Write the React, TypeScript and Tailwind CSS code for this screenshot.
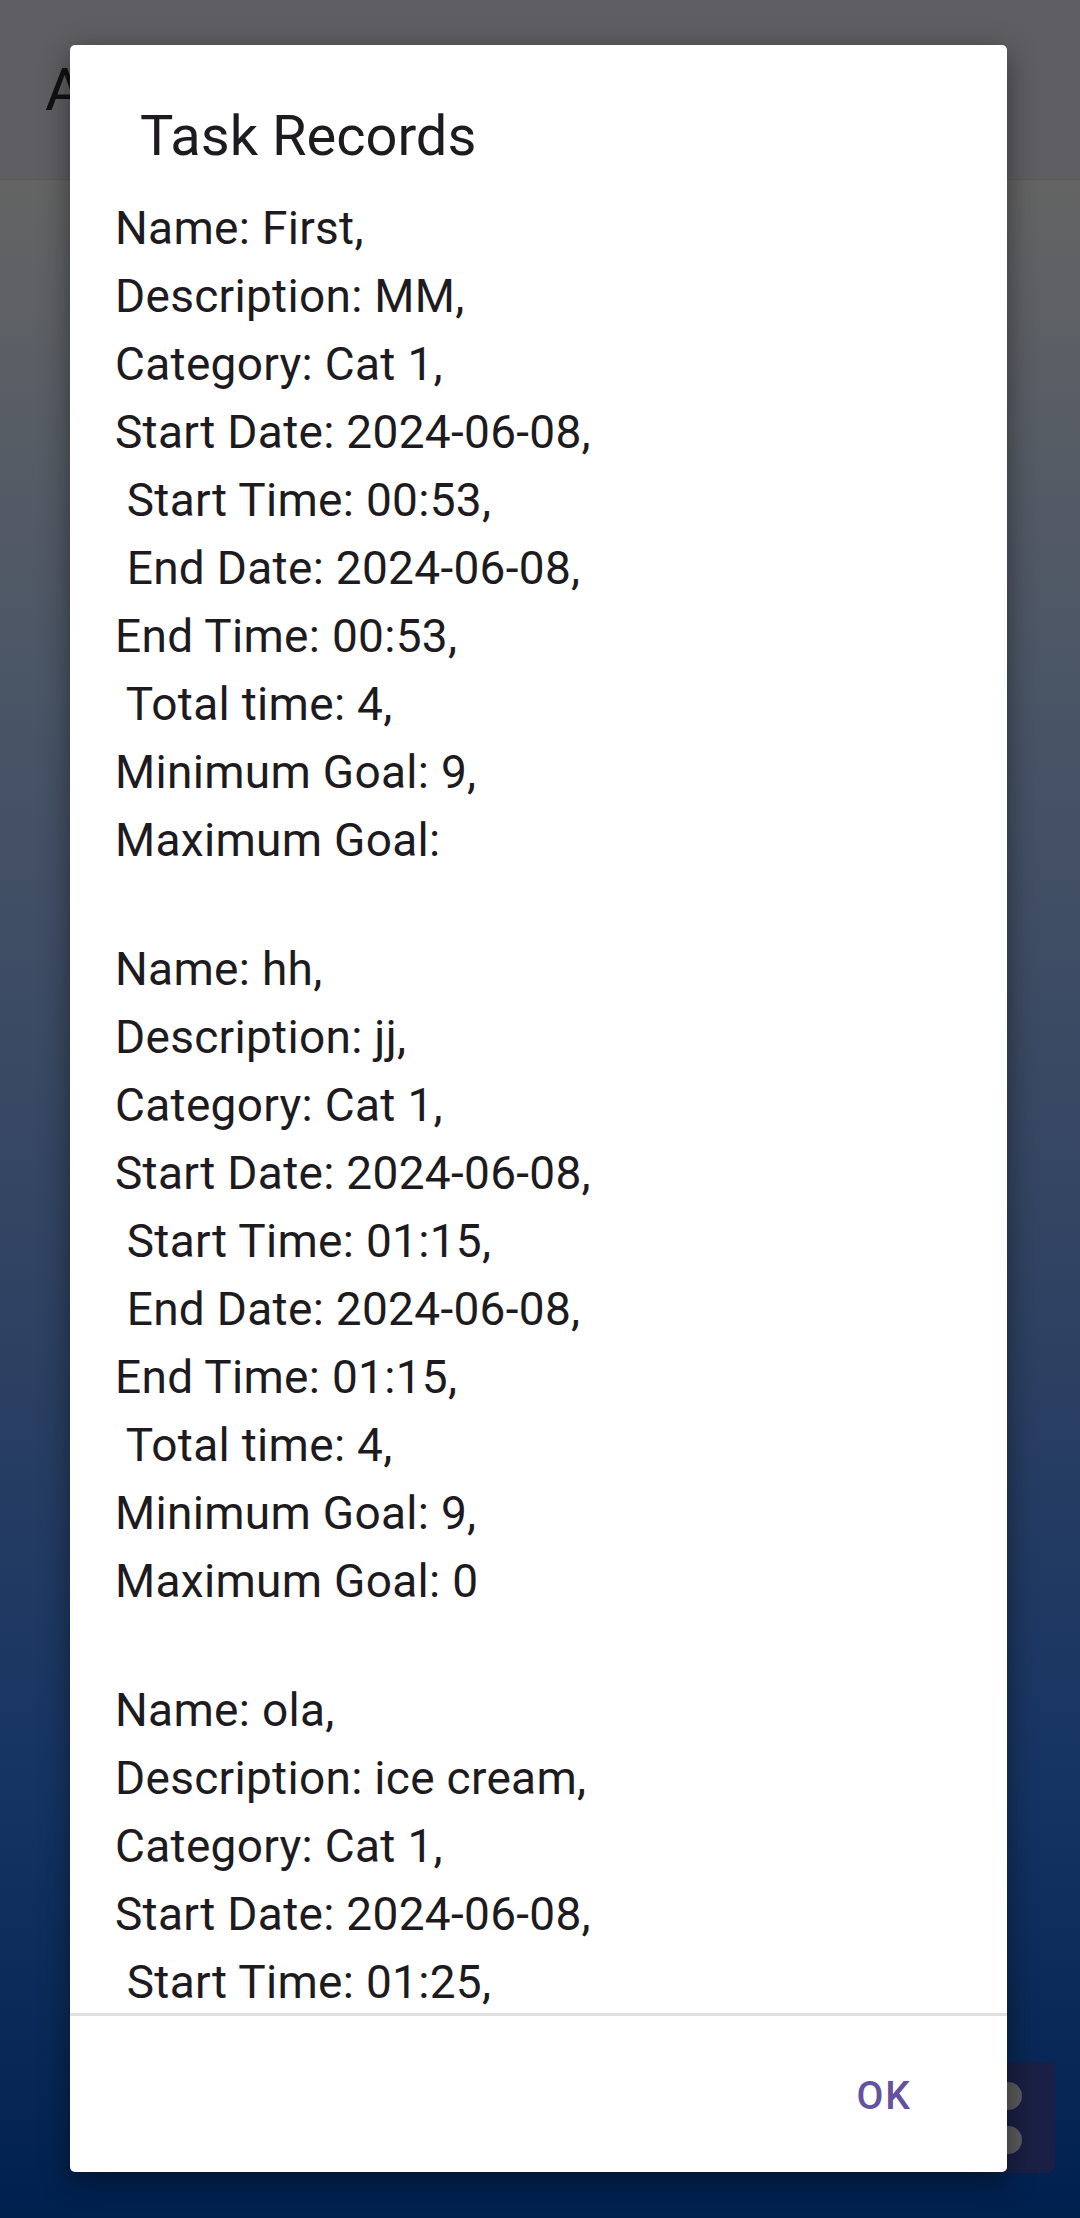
import React from "react";

interface TaskRecord {
  name: string;
  description: string;
  category: string;
  startDate: string;
  startTime: string;
  endDate: string;
  endTime: string;
  totalTime: string;
  minGoal: string;
  maxGoal: string;
}

const records: TaskRecord[] = [
  {
    name: "First",
    description: "MM",
    category: "Cat 1",
    startDate: "2024-06-08",
    startTime: "00:53",
    endDate: "2024-06-08",
    endTime: "00:53",
    totalTime: "4",
    minGoal: "9",
    maxGoal: "",
  },
  {
    name: "hh",
    description: "jj",
    category: "Cat 1",
    startDate: "2024-06-08",
    startTime: "01:15",
    endDate: "2024-06-08",
    endTime: "01:15",
    totalTime: "4",
    minGoal: "9",
    maxGoal: "0",
  },
  {
    name: "ola",
    description: "ice cream",
    category: "Cat 1",
    startDate: "2024-06-08",
    startTime: "01:25",
    endDate: "2024-06-08",
    endTime: "01:25",
    totalTime: "4",
    minGoal: "9",
    maxGoal: "0",
  },
];

function recordLines(r: TaskRecord) {
  return [
    `Name: ${r.name},`,
    `Description: ${r.description},`,
    `Category: ${r.category},`,
    `Start Date: ${r.startDate},`,
    ` Start Time: ${r.startTime},`,
    ` End Date: ${r.endDate},`,
    `End Time: ${r.endTime},`,
    ` Total time: ${r.totalTime},`,
    `Minimum Goal: ${r.minGoal},`,
    `Maximum Goal: ${r.maxGoal}`,
  ];
}

export default function App() {
  return (
    <div
      className="relative w-[1080px] h-[2218px] overflow-hidden flex flex-col"
      style={{ fontFamily: "Roboto, 'Noto Sans', sans-serif" }}
    >
      {/* App bar (dimmed by scrim) */}
      <header className="h-[180px] shrink-0 bg-[#5f5e62] flex items-center pl-[45px] border-b border-[#5a595c]">
        <span className="text-[60px] text-[#111111] leading-none">Activity Tracker</span>
      </header>

      {/* Page body (dimmed gradient) */}
      <main className="flex-1 bg-[linear-gradient(180deg,#646464_0%,#4a5566_25%,#2f4262_55%,#143363_80%,#00204e_100%)]" />

      {/* FAB column partly behind dialog */}
      <div className="absolute left-[960px] top-[2062px] w-[95px] h-[111px] rounded-[8px] bg-[#1a1f45] flex flex-col justify-center gap-[16px] pl-[34px]">
        <div className="w-[28px] h-[28px] rounded-full bg-[#5b5b5f]" />
        <div className="w-[28px] h-[28px] rounded-full bg-[#5b5b5f]" />
      </div>

      {/* Dialog */}
      <div className="absolute left-[70px] top-[45px] w-[937px] h-[2127px] bg-white rounded-[5px] shadow-[0_8px_30px_rgba(0,0,0,0.45)] flex flex-col overflow-hidden">
        <div className="pt-[56px] pl-[70px] h-[127px] shrink-0">
          <h2 className="text-[56px] leading-[70px] text-[#1d1b20] font-normal">Task Records</h2>
        </div>

        <div className="flex-1 overflow-hidden pt-[22px] pl-[45px] text-[46px] text-[#1d1b20]">
          {records.map((r, i) => (
            <div key={i}>
              {recordLines(r).map((line, j) => (
                <div key={j} className="h-[68px] leading-[68px] whitespace-pre tracking-[0.3px]">
                  {line}
                </div>
              ))}
              <div className="h-[61px]" />
            </div>
          ))}
        </div>

        <div className="h-[3px] bg-[#e0e0e0] shrink-0" />

        <div className="h-[156px] shrink-0 flex items-center justify-end pr-[95px] pt-[4px]">
          <button className="text-[39px] font-medium tracking-[2px] text-[#65519d] leading-none">
            OK
          </button>
        </div>
      </div>
    </div>
  );
}
